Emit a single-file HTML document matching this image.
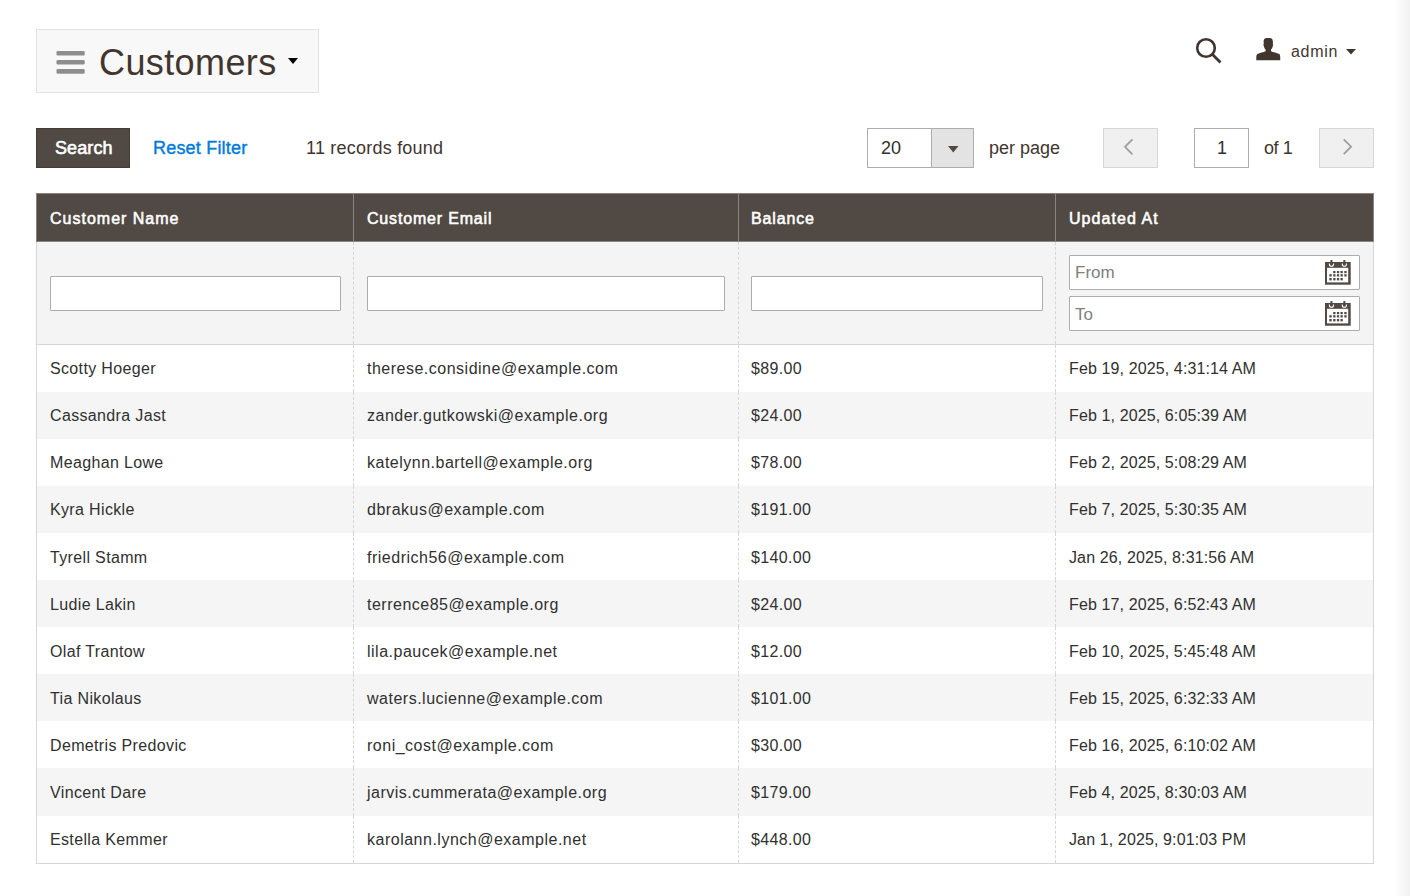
<!DOCTYPE html>
<html><head><meta charset="utf-8">
<style>
*{box-sizing:border-box;margin:0;padding:0}
html,body{width:1410px;height:896px;overflow:hidden;background:#fff;font-family:"Liberation Sans",sans-serif;color:#303030}
.a{position:absolute}
.t{position:absolute;white-space:nowrap;line-height:1}
#shade{position:absolute;left:1394px;top:0;width:16px;height:896px;background:linear-gradient(to right,rgba(0,0,0,0),rgba(0,0,0,0.055))}
.hb{left:36px;top:29px;width:283px;height:64px;background:#f8f8f8;border:1px solid #e3e3e3}
.title{left:99px;top:45px;font-size:36px;color:#41362f;letter-spacing:0.4px}
.btn{left:36px;top:128px;width:94px;height:40px;background:#514943;border:1px solid #463b34}
.tb{font-size:18px}
.sel{left:867px;top:128px;width:107px;height:40px;border:1px solid #adadad;background:#fff}
.pg{top:128px;width:55px;height:40px;background:#f0f0f0;border:1px solid #d6d6d6}
.pin{left:1194px;top:128px;width:55px;height:40px;border:1px solid #adadad;background:#fff}
.thead{left:36px;top:193px;width:1338px;height:49px;background:#514943;border:1px solid #8a837f}
.vl{position:absolute;width:1px;background:#8a837f}
.th{font-size:16px;color:#fff;top:211px;letter-spacing:0.55px;-webkit-text-stroke:0.55px #fff}
.frow{left:36px;top:242px;width:1338px;height:103px;background:#f4f4f4;border-left:1px solid #d6d6d6;border-right:1px solid #d6d6d6;border-bottom:1px solid #d6d6d6}
.inp{position:absolute;background:#fff;border:1px solid #adadad;border-radius:1px;height:35px}
.row{position:absolute;left:36px;width:1338px;border-left:1px solid #d6d6d6;border-right:1px solid #d6d6d6}
.row.e{background:#f5f5f5}
.dl{position:absolute;width:1px;border-left:1px dashed #d6d6d6}
.td{font-size:16px;color:#303030;letter-spacing:0.35px}
.cal{position:absolute}
</style></head><body>
<div id="shade"></div>

<!-- page header -->
<div class="a hb"></div>
<svg class="a" style="left:50px;top:44px" width="45" height="36" viewBox="0 0 45 36"><g fill="#8e8e8e"><rect x="6.5" y="7" width="28.2" height="4.6" rx="1.3"/><rect x="6.5" y="16" width="28.2" height="4.6" rx="1.3"/><rect x="6.5" y="25.1" width="28.2" height="4.7" rx="1.3"/></g></svg>
<div class="t title">Customers</div>
<svg class="a" style="left:288px;top:58px" width="11" height="7" viewBox="0 0 11 7"><path d="M0 0H10L5 6Z" fill="#000"/></svg>

<!-- search icon -->
<svg class="a" style="left:1192px;top:34px" width="34" height="34" viewBox="0 0 34 34">
<circle cx="14" cy="14" r="8.8" fill="none" stroke="#41362f" stroke-width="2.6"/>
<path d="M20.3 20.3L28.5 28.5" stroke="#41362f" stroke-width="2.8" stroke-linecap="butt"/>
</svg>
<!-- user icon -->
<svg class="a" style="left:1256px;top:38px" width="25" height="23" viewBox="0 0 25 23">
<path d="M8 1.5C8.6 0.3 10 0 12.3 0C14.6 0 16 0.5 16.5 1.8C17 3 17 4.5 16.8 6.3C17.4 6.4 17.4 7.6 16.7 8.2C16.4 10 15.6 11 15 11.6V13.3C17 14.3 21 15 23.2 16C24.2 16.6 24.3 18 24.3 22.3H0.3C0.3 18 0.4 16.6 1.4 16C3.6 15 7.6 14.3 9.6 13.3V11.6C9 11 8.2 10 7.9 8.2C7.2 7.6 7.2 6.4 7.8 6.3C7.6 4.5 7.5 2.7 8 1.5Z" fill="#41362f"/>
</svg>
<div class="t" style="left:1291px;top:44px;font-size:16px;color:#41362f;letter-spacing:0.7px">admin</div>
<svg class="a" style="left:1346px;top:49px" width="11" height="6" viewBox="0 0 11 6"><path d="M0 0H10L5 5.5Z" fill="#41362f"/></svg>

<!-- toolbar -->
<div class="a btn"></div>
<div class="t tb" style="left:55px;top:139px;color:#fff;letter-spacing:0.1px;-webkit-text-stroke:0.6px #fff">Search</div>
<div class="t tb" style="left:153px;top:139px;color:#007bdb;letter-spacing:0.2px;-webkit-text-stroke:0.4px #007bdb">Reset Filter</div>
<div class="t tb" style="left:306px;top:139px;color:#41362f;letter-spacing:0.22px">11 records found</div>

<div class="a sel"></div>
<div class="a" style="left:931px;top:129px;width:42px;height:38px;background:#e3e3e3;border-left:1px solid #adadad"></div>
<div class="t tb" style="left:881px;top:139px;color:#303030">20</div>
<svg class="a" style="left:948px;top:146px" width="11" height="7" viewBox="0 0 11 7"><path d="M0 0H10.5L5.25 6.5Z" fill="#514943"/></svg>
<div class="t tb" style="left:989px;top:139px;color:#41362f">per page</div>

<div class="a pg" style="left:1103px"></div>
<svg class="a" style="left:1120px;top:136px" width="16" height="22" viewBox="0 0 16 22"><path d="M12.4 3.3L5 10.8L12.4 18.3" fill="none" stroke="#a39d98" stroke-width="1.8"/></svg>
<div class="a pin"></div>
<div class="t tb" style="left:1217px;top:139px;color:#303030">1</div>
<div class="t tb" style="left:1264px;top:139px;color:#41362f;letter-spacing:-0.4px">of 1</div>
<div class="a pg" style="left:1319px"></div>
<svg class="a" style="left:1340px;top:136px" width="16" height="22" viewBox="0 0 16 22"><path d="M3.7 3.3L11.1 10.7L3.7 18.1" fill="none" stroke="#a39d98" stroke-width="1.8"/></svg>

<!-- table header -->
<div class="a thead"></div>
<div class="vl" style="left:353px;top:194px;height:47px"></div>
<div class="vl" style="left:738px;top:194px;height:47px"></div>
<div class="vl" style="left:1055px;top:194px;height:47px"></div>
<div class="t th" style="left:50px;letter-spacing:1px">Customer Name</div>
<div class="t th" style="left:367px;letter-spacing:0.82px">Customer Email</div>
<div class="t th" style="left:751px;letter-spacing:0.85px">Balance</div>
<div class="t th" style="left:1069px;letter-spacing:1.05px">Updated At</div>

<!-- filter row -->
<div class="a frow"></div>
<div class="dl" style="left:353px;top:242px;height:102px"></div>
<div class="dl" style="left:738px;top:242px;height:102px"></div>
<div class="dl" style="left:1055px;top:242px;height:102px"></div>
<div class="inp" style="left:50px;top:276px;width:291px"></div>
<div class="inp" style="left:367px;top:276px;width:358px"></div>
<div class="inp" style="left:751px;top:276px;width:292px"></div>
<div class="inp" style="left:1069px;top:255px;width:291px"></div>
<div class="inp" style="left:1069px;top:296px;width:291px"></div>
<div class="t" style="left:1075px;top:264px;font-size:17px;color:#808080">From</div>
<div class="t" style="left:1075px;top:306px;font-size:17px;color:#808080">To</div>
<svg class="cal" style="left:1325px;top:260px" width="26" height="25" viewBox="0 0 26 25" id="cal1">
<rect x="0" y="2" width="25.7" height="22.7" fill="#514943"/>
<rect x="2" y="7.8" width="21.2" height="14.6" fill="#fff"/>
<g fill="#514943"><rect x="8.2" y="11" width="2.3" height="2.2"/><rect x="11.9" y="11" width="2.3" height="2.2"/><rect x="15.5" y="11" width="2.3" height="2.2"/><rect x="19.3" y="11" width="2.3" height="2.2"/>
<rect x="4.3" y="14.2" width="2.4" height="2.3"/><rect x="8.2" y="14.2" width="2.3" height="2.3"/><rect x="11.9" y="14.2" width="2.3" height="2.3"/><rect x="15.5" y="14.2" width="2.3" height="2.3"/><rect x="19.3" y="14.2" width="2.3" height="2.3"/>
<rect x="4.3" y="18" width="2.4" height="2.4"/><rect x="8.2" y="18" width="2.3" height="2.4"/><rect x="11.9" y="18" width="2.3" height="2.4"/><rect x="15.5" y="18" width="2.3" height="2.4"/></g>
<g fill="none" stroke="#fff" stroke-width="1.1"><path d="M4.4 3.4V4.2A2.05 2.05 0 0 0 8.5 4.2V3.4"/><path d="M17.3 3.4V4.2A2.05 2.05 0 0 0 21.4 4.2V3.4"/></g>
<g stroke="#514943" stroke-width="2"><path d="M6.45 0V5"/><path d="M19.35 0V5"/></g>
</svg>
<svg class="cal" style="left:1325px;top:301px" width="26" height="25" viewBox="0 0 26 25">
<rect x="0" y="2" width="25.7" height="22.7" fill="#514943"/>
<rect x="2" y="7.8" width="21.2" height="14.6" fill="#fff"/>
<g fill="#514943"><rect x="8.2" y="11" width="2.3" height="2.2"/><rect x="11.9" y="11" width="2.3" height="2.2"/><rect x="15.5" y="11" width="2.3" height="2.2"/><rect x="19.3" y="11" width="2.3" height="2.2"/>
<rect x="4.3" y="14.2" width="2.4" height="2.3"/><rect x="8.2" y="14.2" width="2.3" height="2.3"/><rect x="11.9" y="14.2" width="2.3" height="2.3"/><rect x="15.5" y="14.2" width="2.3" height="2.3"/><rect x="19.3" y="14.2" width="2.3" height="2.3"/>
<rect x="4.3" y="18" width="2.4" height="2.4"/><rect x="8.2" y="18" width="2.3" height="2.4"/><rect x="11.9" y="18" width="2.3" height="2.4"/><rect x="15.5" y="18" width="2.3" height="2.4"/></g>
<g fill="none" stroke="#fff" stroke-width="1.1"><path d="M4.4 3.4V4.2A2.05 2.05 0 0 0 8.5 4.2V3.4"/><path d="M17.3 3.4V4.2A2.05 2.05 0 0 0 21.4 4.2V3.4"/></g>
<g stroke="#514943" stroke-width="2"><path d="M6.45 0V5"/><path d="M19.35 0V5"/></g>
</svg>

<!-- rows -->
<!--ROWS-->
<div class="row" style="top:345px;height:47px"></div>
<div class="row e" style="top:392px;height:47px"></div>
<div class="row" style="top:439px;height:47px"></div>
<div class="row e" style="top:486px;height:47px"></div>
<div class="row" style="top:533px;height:47px"></div>
<div class="row e" style="top:580px;height:47px"></div>
<div class="row" style="top:627px;height:47px"></div>
<div class="row e" style="top:674px;height:47px"></div>
<div class="row" style="top:721px;height:47px"></div>
<div class="row e" style="top:768px;height:48px"></div>
<div class="row" style="top:816px;height:47px"></div>
<div class="a" style="left:36px;top:863px;width:1338px;height:1px;background:#d6d6d6"></div>
<div class="dl" style="left:353px;top:345px;height:47px"></div>
<div class="dl" style="left:738px;top:345px;height:47px"></div>
<div class="dl" style="left:1055px;top:345px;height:47px"></div>
<div class="dl" style="left:353px;top:392px;height:47px"></div>
<div class="dl" style="left:738px;top:392px;height:47px"></div>
<div class="dl" style="left:1055px;top:392px;height:47px"></div>
<div class="dl" style="left:353px;top:439px;height:47px"></div>
<div class="dl" style="left:738px;top:439px;height:47px"></div>
<div class="dl" style="left:1055px;top:439px;height:47px"></div>
<div class="dl" style="left:353px;top:486px;height:47px"></div>
<div class="dl" style="left:738px;top:486px;height:47px"></div>
<div class="dl" style="left:1055px;top:486px;height:47px"></div>
<div class="dl" style="left:353px;top:533px;height:47px"></div>
<div class="dl" style="left:738px;top:533px;height:47px"></div>
<div class="dl" style="left:1055px;top:533px;height:47px"></div>
<div class="dl" style="left:353px;top:580px;height:47px"></div>
<div class="dl" style="left:738px;top:580px;height:47px"></div>
<div class="dl" style="left:1055px;top:580px;height:47px"></div>
<div class="dl" style="left:353px;top:627px;height:47px"></div>
<div class="dl" style="left:738px;top:627px;height:47px"></div>
<div class="dl" style="left:1055px;top:627px;height:47px"></div>
<div class="dl" style="left:353px;top:674px;height:47px"></div>
<div class="dl" style="left:738px;top:674px;height:47px"></div>
<div class="dl" style="left:1055px;top:674px;height:47px"></div>
<div class="dl" style="left:353px;top:721px;height:47px"></div>
<div class="dl" style="left:738px;top:721px;height:47px"></div>
<div class="dl" style="left:1055px;top:721px;height:47px"></div>
<div class="dl" style="left:353px;top:768px;height:48px"></div>
<div class="dl" style="left:738px;top:768px;height:48px"></div>
<div class="dl" style="left:1055px;top:768px;height:48px"></div>
<div class="dl" style="left:353px;top:816px;height:47px"></div>
<div class="dl" style="left:738px;top:816px;height:47px"></div>
<div class="dl" style="left:1055px;top:816px;height:47px"></div>
<div class="t td" style="left:50px;top:361px;letter-spacing:0.35px">Scotty Hoeger</div>
<div class="t td" style="left:367px;top:361px;letter-spacing:0.5px">therese.considine@example.com</div>
<div class="t td" style="left:751px;top:361px;letter-spacing:0.35px">$89.00</div>
<div class="t td" style="left:1069px;top:361px;letter-spacing:0.12px">Feb 19, 2025, 4:31:14 AM</div>
<div class="t td" style="left:50px;top:408px;letter-spacing:0.35px">Cassandra Jast</div>
<div class="t td" style="left:367px;top:408px;letter-spacing:0.5px">zander.gutkowski@example.org</div>
<div class="t td" style="left:751px;top:408px;letter-spacing:0.35px">$24.00</div>
<div class="t td" style="left:1069px;top:408px;letter-spacing:0.12px">Feb 1, 2025, 6:05:39 AM</div>
<div class="t td" style="left:50px;top:455px;letter-spacing:0.35px">Meaghan Lowe</div>
<div class="t td" style="left:367px;top:455px;letter-spacing:0.5px">katelynn.bartell@example.org</div>
<div class="t td" style="left:751px;top:455px;letter-spacing:0.35px">$78.00</div>
<div class="t td" style="left:1069px;top:455px;letter-spacing:0.12px">Feb 2, 2025, 5:08:29 AM</div>
<div class="t td" style="left:50px;top:502px;letter-spacing:0.35px">Kyra Hickle</div>
<div class="t td" style="left:367px;top:502px;letter-spacing:0.5px">dbrakus@example.com</div>
<div class="t td" style="left:751px;top:502px;letter-spacing:0.35px">$191.00</div>
<div class="t td" style="left:1069px;top:502px;letter-spacing:0.12px">Feb 7, 2025, 5:30:35 AM</div>
<div class="t td" style="left:50px;top:550px;letter-spacing:0.35px">Tyrell Stamm</div>
<div class="t td" style="left:367px;top:550px;letter-spacing:0.5px">friedrich56@example.com</div>
<div class="t td" style="left:751px;top:550px;letter-spacing:0.35px">$140.00</div>
<div class="t td" style="left:1069px;top:550px;letter-spacing:0.12px">Jan 26, 2025, 8:31:56 AM</div>
<div class="t td" style="left:50px;top:597px;letter-spacing:0.35px">Ludie Lakin</div>
<div class="t td" style="left:367px;top:597px;letter-spacing:0.5px">terrence85@example.org</div>
<div class="t td" style="left:751px;top:597px;letter-spacing:0.35px">$24.00</div>
<div class="t td" style="left:1069px;top:597px;letter-spacing:0.12px">Feb 17, 2025, 6:52:43 AM</div>
<div class="t td" style="left:50px;top:644px;letter-spacing:0.35px">Olaf Trantow</div>
<div class="t td" style="left:367px;top:644px;letter-spacing:0.5px">lila.paucek@example.net</div>
<div class="t td" style="left:751px;top:644px;letter-spacing:0.35px">$12.00</div>
<div class="t td" style="left:1069px;top:644px;letter-spacing:0.12px">Feb 10, 2025, 5:45:48 AM</div>
<div class="t td" style="left:50px;top:691px;letter-spacing:0.35px">Tia Nikolaus</div>
<div class="t td" style="left:367px;top:691px;letter-spacing:0.5px">waters.lucienne@example.com</div>
<div class="t td" style="left:751px;top:691px;letter-spacing:0.35px">$101.00</div>
<div class="t td" style="left:1069px;top:691px;letter-spacing:0.12px">Feb 15, 2025, 6:32:33 AM</div>
<div class="t td" style="left:50px;top:738px;letter-spacing:0.35px">Demetris Predovic</div>
<div class="t td" style="left:367px;top:738px;letter-spacing:0.5px">roni_cost@example.com</div>
<div class="t td" style="left:751px;top:738px;letter-spacing:0.35px">$30.00</div>
<div class="t td" style="left:1069px;top:738px;letter-spacing:0.12px">Feb 16, 2025, 6:10:02 AM</div>
<div class="t td" style="left:50px;top:785px;letter-spacing:0.35px">Vincent Dare</div>
<div class="t td" style="left:367px;top:785px;letter-spacing:0.5px">jarvis.cummerata@example.org</div>
<div class="t td" style="left:751px;top:785px;letter-spacing:0.35px">$179.00</div>
<div class="t td" style="left:1069px;top:785px;letter-spacing:0.12px">Feb 4, 2025, 8:30:03 AM</div>
<div class="t td" style="left:50px;top:832px;letter-spacing:0.35px">Estella Kemmer</div>
<div class="t td" style="left:367px;top:832px;letter-spacing:0.5px">karolann.lynch@example.net</div>
<div class="t td" style="left:751px;top:832px;letter-spacing:0.35px">$448.00</div>
<div class="t td" style="left:1069px;top:832px;letter-spacing:0.12px">Jan 1, 2025, 9:01:03 PM</div>
<!--/ROWS-->





</body></html>
